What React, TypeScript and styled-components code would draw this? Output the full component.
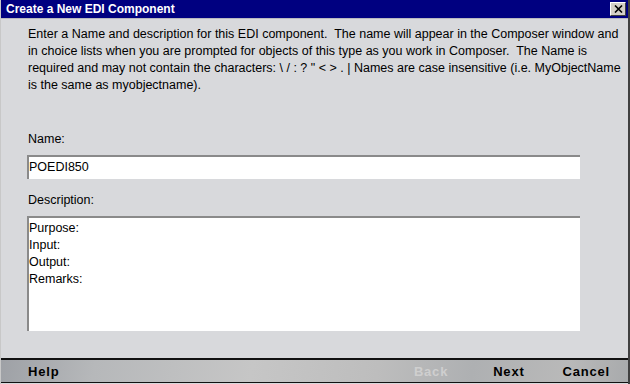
import React from 'react';
import styled, { createGlobalStyle } from 'styled-components';

const GlobalStyle = createGlobalStyle`
  html, body {
    margin: 0;
    padding: 0;
    background: #d8d9dc;
    overflow: hidden;
  }
`;

const Window = styled.div`
  width: 630px;
  height: 384px;
  box-sizing: border-box;
  display: flex;
  flex-direction: column;
  overflow: hidden;
  background: #d8d9dc;
  border-left: 1px solid #c8c8c8;
  border-right: 2px solid #404040;
  font-family: "Liberation Sans", Arial, sans-serif;
  color: #000;
`;

const TitleBar = styled.div`
  height: 18px;
  flex-shrink: 0;
  display: flex;
  align-items: center;
  justify-content: space-between;
  background: #000080;
  color: #fff;
  font-weight: bold;
  font-size: 12px;
  padding: 0 2px 0 5px;
  border-bottom: 1px solid #b8b8c0;
`;

const CloseButton = styled.div`
  width: 14px;
  height: 12px;
  display: flex;
  align-items: center;
  justify-content: center;
  background: #d4d0c8;
  border-top: 1px solid #fff;
  border-left: 1px solid #fff;
  border-right: 1px solid #404040;
  border-bottom: 1px solid #404040;
`;

const Content = styled.div`
  flex: 1;
  display: flex;
  flex-direction: column;
  padding: 7px 48px 0 26px;
`;

const Intro = styled.p`
  margin: 0 0 0 1px;
  font-size: 12.5px;
  line-height: 17px;
  white-space: pre;
`;

const Label = styled.div<{ $top: number }>`
  font-size: 12.5px;
  line-height: 17px;
  margin: ${(p) => p.$top}px 0 7px 1px;
`;

const Field = styled.div<{ $height: number }>`
  box-sizing: border-box;
  width: 553px;
  height: ${(p) => p.$height}px;
  background: #fff;
  border-top: 2px solid #8a8a8a;
  border-left: 2px solid #8a8a8a;
  padding: 2px 2px 0 0;
  font-size: 12.5px;
  line-height: 17px;
  white-space: pre;
`;

const FooterBar = styled.div`
  height: 22px;
  flex-shrink: 0;
  display: flex;
  align-items: center;
  border-top: 2px solid #111;
  border-bottom: 1px solid #111;
  margin-bottom: 1px;
  background: linear-gradient(100deg, #9ea1a6 0%, #b6b8ba 15%, #c6c6c6 40%, #bdbdbd 60%, #aeb0b2 75%, #b9b9b9 90%, #a8aaac 100%);
  font-size: 13px;
  font-weight: bold;
`;

const FooterButton = styled.span<{ $left: number; $disabled?: boolean }>`
  margin-left: ${(p) => p.$left}px;
  color: ${(p) => (p.$disabled ? '#cfcfcf' : '#000')};
  letter-spacing: 0.8px;
`;

const Spacer = styled.div`
  flex: 1;
`;

const App = () => {
  return (
    <>
      <GlobalStyle />
      <Window>
        <TitleBar>
          <span>Create a New EDI Component</span>
          <CloseButton>
            <svg width="9" height="8" viewBox="0 0 9 8">
              <path d="M1 0.5 L8 7.5 M8 0.5 L1 7.5" stroke="#000" strokeWidth="1.6" />
            </svg>
          </CloseButton>
        </TitleBar>
        <Content>
          <Intro>
            {'Enter a Name and description for this EDI component.  The name will appear in the Composer window and\n'}
            {'in choice lists when you are prompted for objects of this type as you work in Composer.  The Name is\n'}
            {'required and may not contain the characters: \\ / : ? " < > . | Names are case insensitive (i.e. MyObjectName\n'}
            {'is the same as myobjectname).'}
          </Intro>
          <Label $top={37}>Name:</Label>
          <Field $height={24}>POEDI850</Field>
          <Label $top={13}>Description:</Label>
          <Field $height={115}>{'Purpose:\nInput:\nOutput:\nRemarks:'}</Field>
        </Content>
        <FooterBar>
          <FooterButton $left={27}>Help</FooterButton>
          <Spacer />
          <FooterButton $left={0} $disabled>Back</FooterButton>
          <FooterButton $left={45}>Next</FooterButton>
          <FooterButton $left={38}>Cancel</FooterButton>
          <FooterButton $left={18} />
        </FooterBar>
      </Window>
    </>
  );
};

export default App;
